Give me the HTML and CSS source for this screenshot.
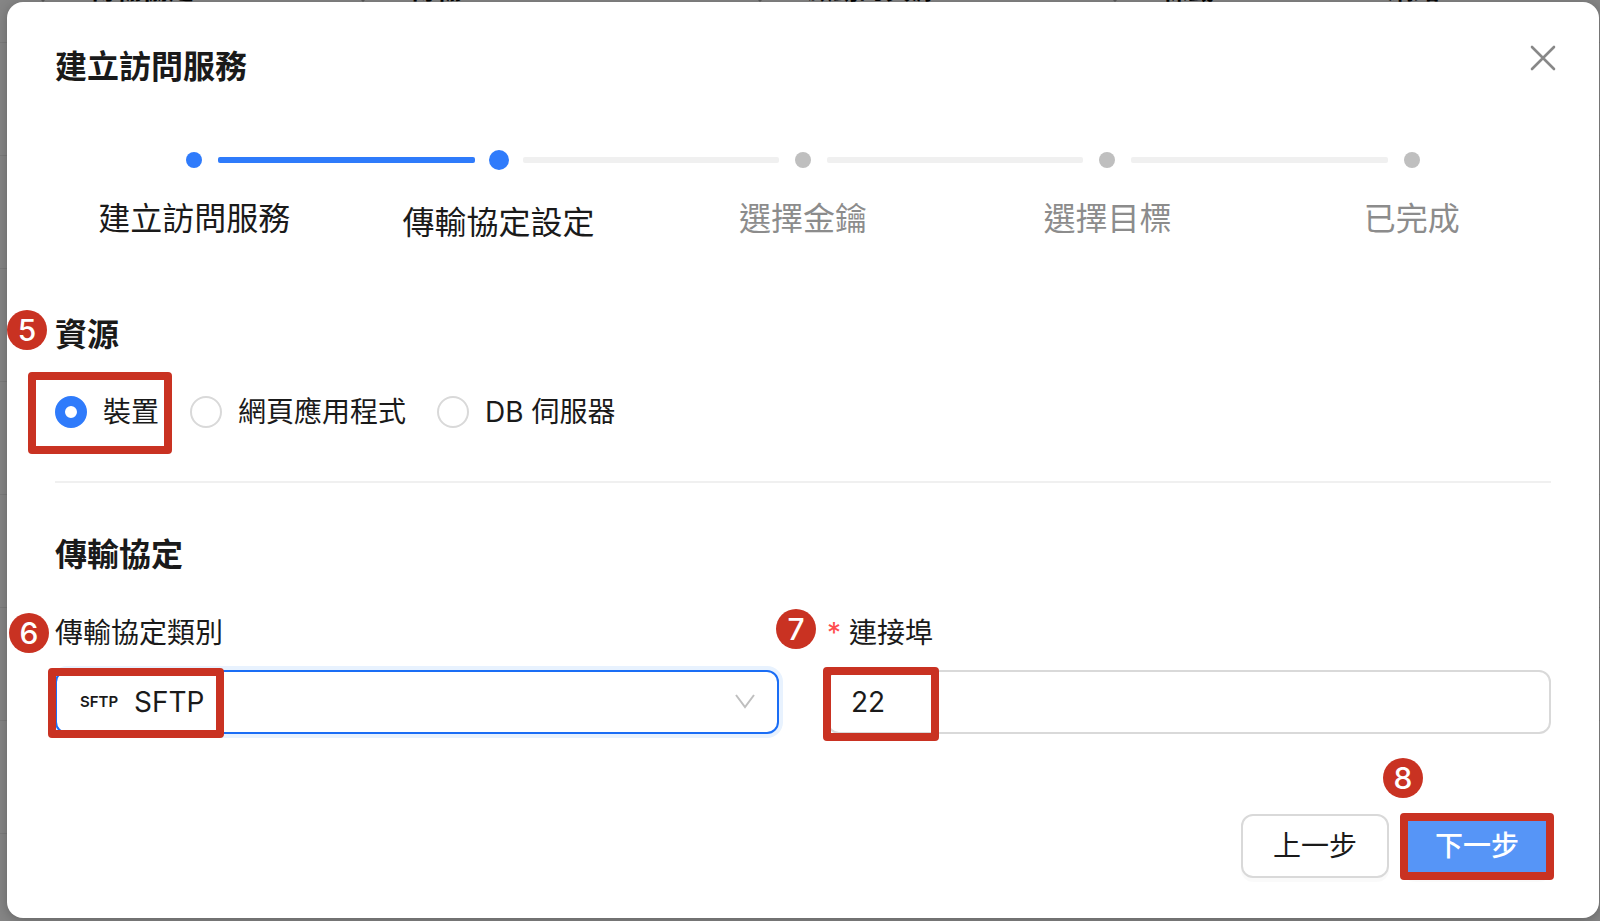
FILE: index.html
```html
<!DOCTYPE html>
<html lang="zh-Hant">
<head>
    <meta charset="UTF-8">
    <meta name="viewport" content="width=device-width, initial-scale=1">
    <title>建立訪問服務</title>
    <link rel="stylesheet" href="styles.css">
</head>
<body>

    <!-- service list behind the dialog -->
    <div class="page" aria-hidden="true">
        <div class="page-head">
            <span class="sortable">傳輸協定</span>
            <span class="sortable">傳輸</span>
            <span class="sortable">啟動的資源</span>
            <span class="sortable">標籤</span>
            <span>網路</span>
        </div>
        <div class="page-row"></div>
        <div class="page-row"></div>
        <div class="page-row"></div>
        <div class="page-row"></div>
        <div class="page-row"></div>
        <div class="page-row"></div>
        <div class="page-row"></div>
    </div>

    <div class="modal" role="dialog" aria-labelledby="modal-title">
        <div class="modal-header">
            <h1 id="modal-title">建立訪問服務</h1>
            <button type="button" class="close" aria-label="關閉">
                <svg viewBox="0 0 26 26" width="26" height="26">
                    <path d="M2 2L24 24M24 2L2 24" fill="none" stroke="currentColor" stroke-width="2.6" stroke-linecap="round"/>
                </svg>
            </button>
        </div>

        <ol class="steps">
            <li class="step done">
                <div class="rail"><i class="line"></i><i class="dot"></i><i class="line"></i></div>
                <span class="step-title">建立訪問服務</span>
            </li>
            <li class="step active" aria-current="step">
                <div class="rail"><i class="line"></i><i class="dot"></i><i class="line"></i></div>
                <span class="step-title">傳輸協定設定</span>
            </li>
            <li class="step">
                <div class="rail"><i class="line"></i><i class="dot"></i><i class="line"></i></div>
                <span class="step-title">選擇金鑰</span>
            </li>
            <li class="step">
                <div class="rail"><i class="line"></i><i class="dot"></i><i class="line"></i></div>
                <span class="step-title">選擇目標</span>
            </li>
            <li class="step">
                <div class="rail"><i class="line"></i><i class="dot"></i><i class="line"></i></div>
                <span class="step-title">已完成</span>
            </li>
        </ol>

        <form class="form">
            <h2 id="resource-title">資源<b class="badge badge-resource">5</b></h2>
            <div class="radios" role="radiogroup" aria-labelledby="resource-title">
                <label class="radio"><input type="radio" name="resource" checked>裝置<span class="mark mark-radio"></span></label>
                <label class="radio"><input type="radio" name="resource">網頁應用程式</label>
                <label class="radio"><input type="radio" name="resource">DB 伺服器</label>
            </div>

            <h2>傳輸協定</h2>
            <div class="fields">
                <div class="field">
                    <div class="field-label">
                        <label for="protocol">傳輸協定類別</label>
                        <b class="badge badge-protocol">6</b>
                    </div>
                    <div class="control select">
                        <span class="tag">SFTP</span>
                        <select id="protocol">
                            <option selected>SFTP</option>
                        </select>
                        <svg class="arrow" viewBox="0 0 22 16" width="22" height="16">
                            <path d="M2 1L11 13L20 1" fill="none" stroke="currentColor" stroke-width="2"/>
                        </svg>
                        <span class="mark mark-protocol"></span>
                    </div>
                </div>
                <div class="field">
                    <div class="field-label">
                        <label for="port"><span class="required">*</span>連接埠</label>
                        <b class="badge badge-port">7</b>
                    </div>
                    <div class="control">
                        <input type="text" id="port" value="22" required>
                        <span class="mark mark-port"></span>
                    </div>
                </div>
            </div>

            <div class="footer">
                <button type="button" class="btn">上一步</button>
                <div class="next">
                    <button type="submit" class="btn btn-primary">下一步</button>
                    <span class="mark mark-next"></span>
                    <b class="badge badge-next">8</b>
                </div>
            </div>
        </form>
    </div>

</body>
</html>
```
FILE: styles.css
```css
* {
    margin: 0;
    padding: 0;
    box-sizing: border-box;
}

body {
    min-height: 100vh;
    padding: 2px 1px 4px 7px;
    background-color: #858585;
    color: #1a1a1a;
    font-family: Inter, "Noto Sans CJK TC", sans-serif;
    font-size: 28px;
    line-height: 44px;
    overflow: hidden;
}

button, input, select {
    font: inherit;
    color: inherit;
}

/* list page under the dialog */
.page {
    position: absolute;
    top: -29px;
    left: 0;
    right: 0;
    z-index: -1;
}

.page-head {
    display: grid;
    grid-template-columns: 320fr 397fr 355fr 226fr 212fr;
    height: 72px;
    padding-left: 90px;
    line-height: 38px;
    font-size: 26px;
    font-weight: 700;
    color: #000;
    border-bottom: 1px solid #7b7b7b;
}

.page-head span {
    position: relative;
}

.sortable::before {
    content: "";
    position: absolute;
    left: -55px;
    top: 23px;
    border: 8px solid transparent;
    border-top-color: #5a5a5a;
}

.page-row {
    height: 113px;
    border-bottom: 1px solid #7b7b7b;
}

.modal {
    min-height: 915px;
    padding: 41px 48px 40px;
    background-color: #fff;
    border-radius: 16px;
    box-shadow: 0 2px 12px rgba(0,0,0,0.25);
}

.modal-header {
    display: flex;
    justify-content: space-between;
    align-items: flex-start;
}

h1, h2 {
    font-size: 32px;
    line-height: 48px;
    font-weight: 600;
}

.close {
    width: 44px;
    height: 30px;
    margin-right: -14px;
    border: none;
    background: none;
    color: #888;
    cursor: pointer;
}

.close svg {
    display: block;
    margin: auto;
}

/* steps */
.steps {
    display: grid;
    grid-template-columns: repeat(5, 1fr);
    list-style: none;
    margin: 59px -13px 0;
}

.step {
    text-align: center;
    color: #8c8c8c;
}

.rail {
    display: flex;
    align-items: center;
    gap: 16px;
    height: 20px;
}

.line {
    flex: 1;
    height: 6px;
    background-color: #f0f0f0;
}

.line:first-child {
    border-radius: 0 2px 2px 0;
}

.line:last-child {
    border-radius: 2px 0 0 2px;
}

.step:first-child .line:first-child,
.step:last-child .line:last-child {
    visibility: hidden;
}

.dot {
    width: 16px;
    height: 16px;
    border-radius: 50%;
    background-color: #bfbfbf;
}

.step-title {
    display: block;
    margin-top: 25px;
    font-size: 32px;
    line-height: 48px;
}

.done,
.active {
    color: #1a1a1a;
}

.done .dot,
.active .dot,
.done .line,
.active .line:first-child {
    background-color: #2f7bfb;
}

.active .rail {
    gap: 14px;
}

.active .dot {
    width: 20px;
    height: 20px;
}

.active .step-title {
    margin-top: 29px;
}

/* form */
.form {
    margin-top: 64px;
}

.form h2 {
    position: relative;
}

.radios {
    display: flex;
    gap: 31px;
    margin: 31px 0 48px;
    padding-bottom: 47px;
    border-bottom: 2px solid #f0f0f0;
}

.radio {
    position: relative;
    display: flex;
    align-items: center;
    gap: 16px;
}

.radio input {
    appearance: none;
    width: 32px;
    height: 32px;
    border: 2px solid #d9d9d9;
    border-radius: 50%;
}

.radio input:checked {
    border: 10px solid #2f7bfb;
}

.fields {
    display: grid;
    grid-template-columns: 1fr 1fr;
    gap: 48px;
    margin-top: 32px;
}

.field-label {
    position: relative;
    margin-bottom: 15px;
}

.required {
    margin-right: 8px;
    color: #ff4d4f;
}

.control {
    position: relative;
    height: 64px;
}

.control input,
.control select {
    display: block;
    width: 100%;
    height: 100%;
    padding: 0 22px;
    border: 2px solid #d9d9d9;
    border-radius: 12px;
    background: #fff;
    outline: none;
}

.select select {
    appearance: none;
    padding-left: 77px;
    border-color: #1a6df5;
    box-shadow: 0 0 0 4px #e8f2fe;
}

.tag {
    position: absolute;
    left: 25px;
    top: 10px;
    font-size: 15px;
    font-weight: 600;
}

.arrow {
    position: absolute;
    right: 23px;
    top: 24px;
    color: #bfbfbf;
}

.footer {
    display: flex;
    justify-content: flex-end;
    gap: 14px;
    margin-top: 80px;
}

.next {
    position: relative;
}

.btn {
    height: 64px;
    padding: 0 30px;
    border: 2px solid #d9d9d9;
    border-radius: 12px;
    background-color: #fff;
    box-shadow: 0 4px 0 rgba(0,0,0,0.02);
    cursor: pointer;
}

.btn-primary {
    border-color: #5695f7;
    background-color: #5695f7;
    color: #fff;
    font-weight: 500;
}

/* red guide marks over the controls */
.mark {
    position: absolute;
    border: 8px solid #c93222;
    border-radius: 4px;
    pointer-events: none;
}

.mark-radio {
    left: -27px;
    top: -18px;
    width: 144px;
    height: 82px;
}

.mark-protocol {
    left: -7px;
    top: -2px;
    width: 176px;
    height: 70px;
}

.mark-port {
    left: -4px;
    top: -3px;
    width: 116px;
    height: 74px;
}

.mark-next {
    inset: -1px -3px -2px;
}

.badge {
    position: absolute;
    width: 40px;
    height: 40px;
    border-radius: 50%;
    background-color: #c93222;
    color: #fff;
    font-size: 30px;
    font-weight: 500;
    line-height: 40px;
    text-align: center;
}

.badge-resource {
    left: -48px;
    top: -1px;
}

.badge-protocol {
    left: -46px;
    top: 2px;
}

.badge-port {
    left: -51px;
    top: -2px;
}

.badge-next {
    left: -20px;
    top: -56px;
}
```
